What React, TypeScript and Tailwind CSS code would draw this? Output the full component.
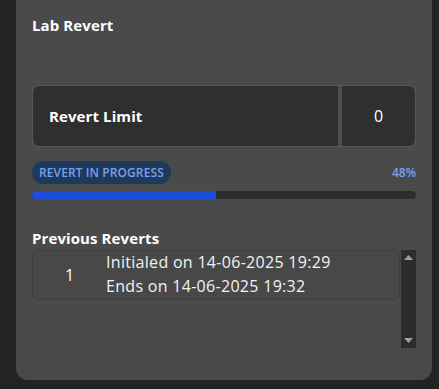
export default function App() {
  const progress = 48;
  return (
    <div className="min-h-[389px] w-[439px] bg-[#232323] pl-4 pr-[7px] font-['Open_Sans',sans-serif]">
      <div className="flex h-[380px] flex-col rounded-b-xl bg-[#4a4a4a] px-4 pt-[14px] text-white">
        <h2 className="text-[15px] leading-[22px] font-bold tracking-[0.1px]">Lab Revert</h2>
        <div className="mt-[24px] h-px bg-[#454545]" />

        <div className="mt-[24px] flex h-[62px] gap-1 rounded-md border border-[#575757] bg-[#4f4f4f]">
          <div className="flex flex-1 items-center rounded-l-md bg-[#2e2f2e] pl-4 text-[15px] font-bold tracking-[0.1px]">
            Revert Limit
          </div>
          <div className="flex w-[73px] items-center justify-center rounded-r-md bg-[#2e2f2e] text-[16px]">
            0
          </div>
        </div>

        <div className="mt-[14px] flex h-[23px] items-center justify-between">
          <span className="flex h-[23px] items-center rounded-full bg-[#1e3a5a] px-[7px] text-[12px] font-semibold tracking-[0.1px] text-[#7a9ff0]">
            REVERT IN PROGRESS
          </span>
          <span className="text-[12px] font-semibold text-[#7a9ff0]">{progress}%</span>
        </div>
        <div className="mt-[7px] h-2 overflow-hidden rounded-full bg-[#2b2c30]">
          <div className="h-full bg-[#1d4ed8]" style={{ width: `${progress}%` }} />
        </div>

        <h3 className="mt-[28px] text-[15px] leading-[22px] font-bold tracking-[0.1px]">Previous Reverts</h3>

        <div className="mt-[1px] flex h-[98px]">
          <div className="flex-1 pr-[1px]">
            <div className="flex h-[50px] items-center rounded-md border border-[#3f3f3f] bg-[#484848]">
              <div className="w-[73px] text-center text-[16px]">1</div>
              <div className="-mt-[2px] text-[16px] leading-[24px] tracking-[0.3px] text-[#f2f2f2]">
                <div>Initialed on 14-06-2025 19:29</div>
                <div>Ends on 14-06-2025 19:32</div>
              </div>
            </div>
          </div>
          <div className="flex w-[15px] flex-col items-center justify-between bg-[#2c2c2c] py-[5px]">
            <svg width="9" height="5" viewBox="0 0 9 5"><path d="M4.5 0L9 5H0z" fill="#a0a0a0" /></svg>
            <svg width="9" height="5" viewBox="0 0 9 5"><path d="M0 0h9L4.5 5z" fill="#a0a0a0" /></svg>
          </div>
        </div>
      </div>
    </div>
  );
}
